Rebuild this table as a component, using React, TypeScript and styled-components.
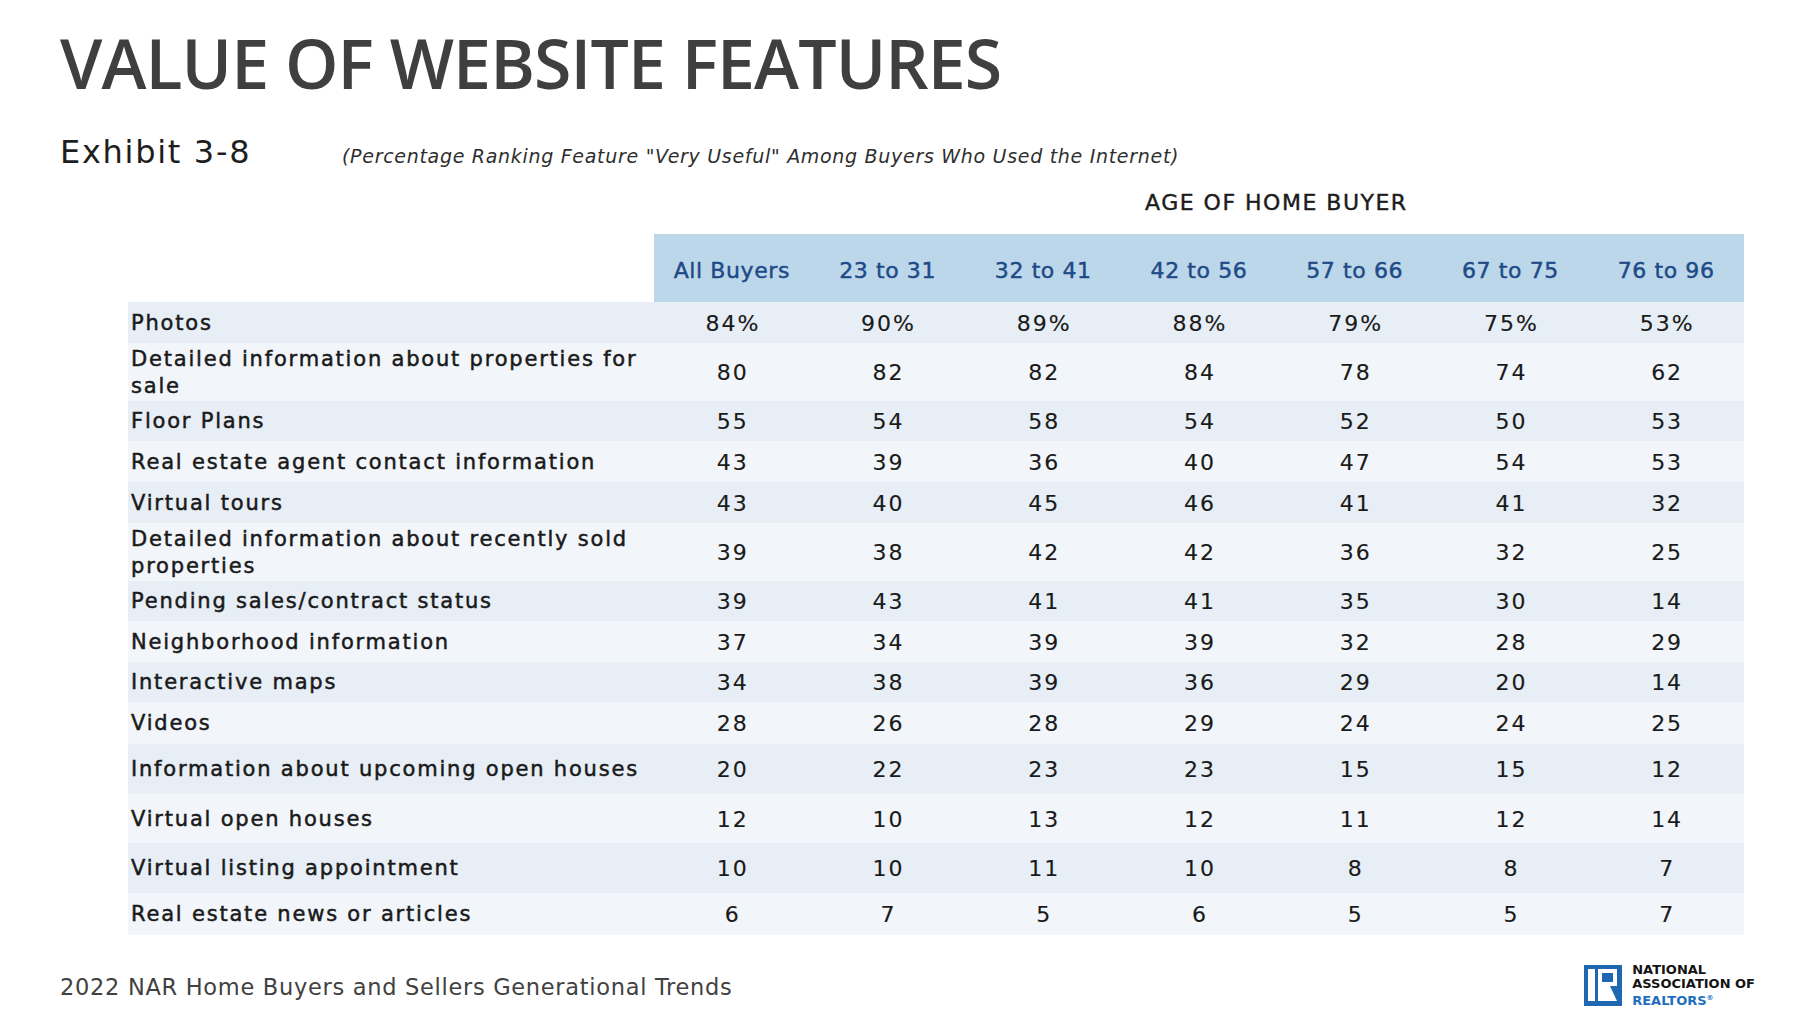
import React from "react";
import styled, { createGlobalStyle } from "styled-components";

const Global = createGlobalStyle`
  html, body { margin: 0; padding: 0; background: #ffffff; }
  body { font-family: "DejaVu Sans", sans-serif; }
`;

const Page = styled.div`
  width: 1814px;
  height: 1027px;
  box-sizing: border-box;
  padding-top: 29px;
  display: flex;
  flex-direction: column;
  background: #ffffff;
  overflow: hidden;
`;

const Title = styled.h1`
  margin: 0 0 0 60px;
  font-family: "Open Sans", sans-serif;
  font-weight: 600;
  font-size: 68px;
  line-height: 68px;
  letter-spacing: -0.9px;
  color: #3f3f3f;
`;

const ExhibitRow = styled.div`
  margin: 35px 0 0 60px;
  display: flex;
  align-items: baseline;
`;

const Exhibit = styled.div`
  font-size: 32px;
  line-height: 40px;
  letter-spacing: 1.7px;
  color: #1e1e1e;
  width: 282px;
`;

const Subtitle = styled.div`
  font-style: italic;
  font-size: 19px;
  letter-spacing: 0.7px;
  color: #2e2e2e;
`;

const AgeLabel = styled.div`
  margin: 19px 0 0 1145px;
  font-size: 22px;
  line-height: 24px;
  letter-spacing: 1.5px;
  color: #1c1c1c;
  -webkit-text-stroke: 0.4px currentColor;
`;

const Table = styled.div`
  margin: 19px 0 0 128px;
  width: 1616px;
  display: flex;
  flex-direction: column;
`;

const Row = styled.div<{ $h: number; $bg: string }>`
  display: grid;
  grid-template-columns: 526px repeat(7, 1fr);
  height: ${(p) => p.$h}px;
  background: ${(p) => p.$bg};
  align-items: center;
  padding-top: 1px;
  box-sizing: border-box;
`;

const HeadRow = styled.div`
  display: grid;
  grid-template-columns: 526px repeat(7, 1fr);
  height: 68px;
`;

const HeadBlank = styled.div`
  background: #ffffff;
`;

const HeadCell = styled.div`
  background: #bdd7ea;
  display: flex;
  align-items: center;
  justify-content: center;
  padding-top: 4px;
  font-size: 22px;
  letter-spacing: 0.6px;
  color: #1d4a87;
  -webkit-text-stroke: 0.45px currentColor;
`;

const Label = styled.div`
  padding-left: 3px;
  font-size: 21px;
  line-height: 27px;
  letter-spacing: 1.8px;
  color: #1a1a1a;
  -webkit-text-stroke: 0.5px currentColor;
`;

const Value = styled.div`
  text-align: center;
  padding-left: 2px;
  font-size: 22px;
  letter-spacing: 2px;
  color: #1a1a1a;
  -webkit-text-stroke: 0.15px currentColor;
`;

const Footer = styled.div`
  margin-top: 29px;
  height: 42px;
  padding: 0 59px 0 60px;
  display: flex;
  align-items: center;
  justify-content: space-between;
`;

const Source = styled.div`
  padding-top: 4px;
  font-size: 22.5px;
  line-height: 26px;
  letter-spacing: 0.7px;
  color: #414141;
`;

const Logo = styled.div`
  display: flex;
  align-items: center;
  gap: 10px;
`;

const LogoText = styled.div`
  font-weight: bold;
  font-size: 13px;
  line-height: 14px;
  color: #141414;
`;

const Realtors = styled.span`
  color: #1f6fbf;
`;

const Reg = styled.sup`
  font-size: 7px;
  vertical-align: 5px;
`;

const headers = ["All Buyers", "23 to 31", "32 to 41", "42 to 56", "57 to 66", "67 to 75", "76 to 96"];

const rows: { label: string; h: number; v: string[] }[] = [
  { label: "Photos", h: 41, v: ["84%", "90%", "89%", "88%", "79%", "75%", "53%"] },
  { label: "Detailed information about properties for sale", h: 58, v: ["80", "82", "82", "84", "78", "74", "62"] },
  { label: "Floor Plans", h: 40, v: ["55", "54", "58", "54", "52", "50", "53"] },
  { label: "Real estate agent contact information", h: 41, v: ["43", "39", "36", "40", "47", "54", "53"] },
  { label: "Virtual tours", h: 41, v: ["43", "40", "45", "46", "41", "41", "32"] },
  { label: "Detailed information about recently sold properties", h: 58, v: ["39", "38", "42", "42", "36", "32", "25"] },
  { label: "Pending sales/contract status", h: 40, v: ["39", "43", "41", "41", "35", "30", "14"] },
  { label: "Neighborhood information", h: 41, v: ["37", "34", "39", "39", "32", "28", "29"] },
  { label: "Interactive maps", h: 40, v: ["34", "38", "39", "36", "29", "20", "14"] },
  { label: "Videos", h: 42, v: ["28", "26", "28", "29", "24", "24", "25"] },
  { label: "Information about upcoming open houses", h: 50, v: ["20", "22", "23", "23", "15", "15", "12"] },
  { label: "Virtual open houses", h: 49, v: ["12", "10", "13", "12", "11", "12", "14"] },
  { label: "Virtual listing appointment", h: 50, v: ["10", "10", "11", "10", "8", "8", "7"] },
  { label: "Real estate news or articles", h: 42, v: ["6", "7", "5", "6", "5", "5", "7"] },
];

const NarMark = () => (
  <svg width="38" height="41" viewBox="0 0 38 41">
    <rect x="0" y="0" width="38" height="41" fill="#1f67b1" />
    <rect x="4" y="4" width="7" height="32" fill="#ffffff" />
    <path d="M14 4 H33 V21 H26 L33 36 H14 Z" fill="#ffffff" />
    <path d="M18 8 H29 V17 H18 Z" fill="#1f67b1" />
  </svg>
);

export default function App() {
  return (
    <Page>
      <Global />
      <Title>VALUE OF WEBSITE FEATURES</Title>
      <ExhibitRow>
        <Exhibit>Exhibit 3-8</Exhibit>
        <Subtitle>(Percentage Ranking Feature "Very Useful" Among Buyers Who Used the Internet)</Subtitle>
      </ExhibitRow>
      <AgeLabel>AGE OF HOME BUYER</AgeLabel>
      <Table>
        <HeadRow>
          <HeadBlank />
          {headers.map((h) => (
            <HeadCell key={h}>{h}</HeadCell>
          ))}
        </HeadRow>
        {rows.map((r, i) => (
          <Row key={r.label} $h={r.h} $bg={i % 2 === 0 ? "#e7eef6" : "#f2f6fa"}>
            <Label>{r.label}</Label>
            {r.v.map((v, j) => (
              <Value key={j}>{v}</Value>
            ))}
          </Row>
        ))}
      </Table>
      <Footer>
        <Source>2022 NAR Home Buyers and Sellers Generational Trends</Source>
        <Logo>
          <NarMark />
          <LogoText>
            NATIONAL
            <br />
            ASSOCIATION OF
            <br />
            <Realtors>
              REALTORS<Reg>®</Reg>
            </Realtors>
          </LogoText>
        </Logo>
      </Footer>
    </Page>
  );
}
